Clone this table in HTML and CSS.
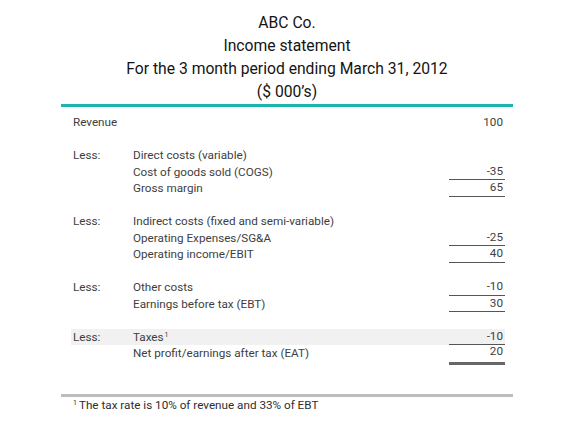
FILE: index.html
```html
<!DOCTYPE html>
<html>
<head>
<meta charset="utf-8">
<link rel="stylesheet" href="styles.css">
</head>
<body>
<div class="sheet">
  <div class="title">
    <div>ABC Co.</div>
    <div>Income statement</div>
    <div>For the 3 month period ending March 31, 2012</div>
    <div>($ 000’s)</div>
  </div>
  <div class="rule-top"></div>
  <div class="rows">
    <div class="row"><span class="lab">Revenue</span><span></span><span class="num">100</span></div>
    <div class="row blank"></div>
    <div class="row"><span class="lab">Less:</span><span>Direct costs (variable)</span><span class="num"></span></div>
    <div class="row"><span></span><span>Cost of goods sold (COGS)</span><span class="num line">-35</span></div>
    <div class="row"><span></span><span>Gross margin</span><span class="num line">65</span></div>
    <div class="row blank"></div>
    <div class="row"><span class="lab">Less:</span><span>Indirect costs (fixed and semi-variable)</span><span class="num"></span></div>
    <div class="row"><span></span><span>Operating Expenses/SG&amp;A</span><span class="num line">-25</span></div>
    <div class="row"><span></span><span>Operating income/EBIT</span><span class="num line">40</span></div>
    <div class="row blank"></div>
    <div class="row"><span class="lab">Less:</span><span>Other costs</span><span class="num line">-10</span></div>
    <div class="row"><span></span><span>Earnings before tax (EBT)</span><span class="num line">30</span></div>
    <div class="row blank"></div>
    <div class="row shaded"><span class="lab">Less:</span><span>Taxes<sup class="sup">1</sup></span><span class="num line">-10</span></div>
    <div class="row"><span></span><span>Net profit/earnings after tax (EAT)</span><span class="num dline">20</span></div>
  </div>
  <div class="rule-bottom"></div>
  <div class="note"><sup class="sup">1</sup>The tax rate is 10% of revenue and 33% of EBT</div>
</div>
</body>
</html>
```

FILE: styles.css
```css
html, body {
  margin: 0;
  padding: 0;
  background: #ffffff;
}
body {
  font-family: Roboto, "Liberation Sans", sans-serif;
}
.sheet {
  margin-left: 61px;
  width: 452px;
}
.title {
  padding-top: 11px;
  text-align: center;
  font-size: 15.7px;
  line-height: 23px;
  color: #141414;
}
.rule-top {
  height: 3px;
  background: #1db4ab;
  margin-top: 1px;
}
.rows {
  margin: 7px 8px 0 10px;
  font-size: 11.7px;
  color: #3e3e3e;
}
.row {
  display: grid;
  grid-template-columns: 60px 1fr 56px;
  height: 16.5px;
  line-height: 16.5px;
  padding-left: 2px;
  white-space: nowrap;
}
.shaded {
  background: #f1f1f1;
}
.num {
  text-align: right;
  padding-right: 2px;
}
.line {
  border-bottom: 1px solid #555;
  line-height: 15.5px;
}
.dline {
  border-bottom: 3px solid #666;
  line-height: 13.5px;
  height: 16.5px;
}
.sup {
  font-size: 7px;
  line-height: 0;
  vertical-align: 4px;
  margin-left: 1px;
}
.rule-bottom {
  height: 3px;
  background: #bdbdbd;
  margin-top: 32px;
}
.note {
  padding-left: 12px;
  font-size: 11.7px;
  line-height: 14px;
  margin-top: 1px;
  color: #2e2e2e;
}
.note .sup {
  margin: 0 2px 0 0;
}
```
